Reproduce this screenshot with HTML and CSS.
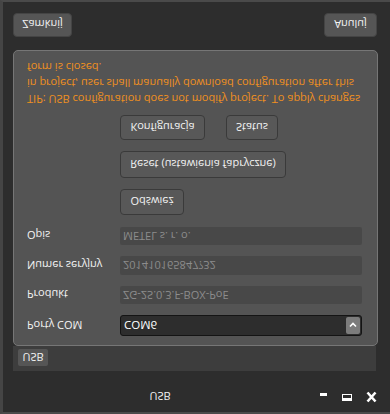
FILE: index.html
```
<!DOCTYPE html>
<html>
<head>
<meta charset="utf-8">
<link rel="stylesheet" href="styles.css">
</head>
<body>
<div class="window">
  <div class="titlebar">
    <span class="title">USB</span>
    <div class="controls">
      <svg class="ic" width="10" height="12" viewBox="0 0 10 12"><rect x="1" y="7" width="7" height="3" fill="#fff"/></svg>
      <svg class="ic" width="12" height="12" viewBox="0 0 12 12"><rect x="1.5" y="2.5" width="9" height="6" fill="none" stroke="#fff" stroke-width="1"/><rect x="1" y="2" width="10" height="3" fill="#fff"/></svg>
      <svg class="ic" width="13" height="12" viewBox="0 0 13 12"><path d="M2.5 1.5 L10.5 10.5 M10.5 1.5 L2.5 10.5" stroke="#fff" stroke-width="2.6" stroke-linecap="butt"/></svg>
    </div>
  </div>
  <div class="tabs"><div class="tab">USB</div></div>
  <div class="panel">
    <div class="row row-combo">
      <span class="label">Porty COM</span>
      <div class="combo"><span>COM6</span><span class="drop"><svg width="8" height="6" viewBox="0 0 8 6"><path d="M1 1.5 L4 4.5 L7 1.5" fill="none" stroke="#fff" stroke-width="1.6"/></svg></span></div>
    </div>
    <div class="row r2">
      <span class="label">Produkt</span>
      <div class="field">ZG-2S.0.3.F-BOX-PoE</div>
    </div>
    <div class="row r3">
      <span class="label">Numer seryjny</span>
      <div class="field f3">201410165847?32</div>
    </div>
    <div class="row r4">
      <span class="label">Opis</span>
      <div class="field">METEL s. r. o.</div>
    </div>
    <div class="actions">
      <button class="btn b-ref">Odśwież</button>
      <button class="btn b-reset">Reset (ustawienia fabryczne)</button>
      <div class="pair">
        <button class="btn b-konf">Konfiguracja</button>
        <button class="btn b-stat">Status</button>
      </div>
    </div>
    <div class="tip">TIP: USB configuration does not modify project. To apply changes<br>in project, user shall manually download configuration after this<br>form is closed.</div>
  </div>
  <div class="footer">
    <button class="btn b-close">Zamknij</button>
    <button class="btn b-cancel">Anuluj</button>
  </div>
</div>
</body>
</html>
```
FILE: styles.css
```
html, body {
  margin: 0;
  padding: 0;
  background: #2d2d2d;
}
body {
  width: 390px;
  height: 414px;
  overflow: hidden;
  transform: scaleY(-1);
  font-family: "Open Sans", "Noto Sans", sans-serif;
  font-size: 11px;
  color: #f2f2f2;
}
.window {
  box-sizing: border-box;
  width: 390px;
  height: 414px;
  background: #2d2d2d;
  border-top: 2px solid #4a4a4a;
  border-left: 3px solid #454545;
  border-bottom: 2px solid #4a4a4a;
  display: flex;
  flex-direction: column;
}
.titlebar {
  height: 30px;
  display: flex;
  align-items: center;
}
.title {
  width: 314px;
  text-align: center;
  font-size: 11px;
  padding-top: 1px;
}
.controls {
  display: flex;
  align-items: center;
  gap: 12px;
  margin-left: 2px;
}
.ic { display: block; }
.tabs {
  margin: 11px 14px 0 10px;
  height: 25px;
  background: #3d3d3d;
  display: flex;
  align-items: flex-end;
  padding: 0 0 3px 5px;
  box-sizing: border-box;
}
.tab {
  width: 30px;
  height: 17px;
  background: #555;
  border-radius: 2px;
  text-align: center;
  line-height: 17px;
  font-size: 11px;
}
.panel {
  margin: 0 12px 0 10px;
  height: 296px;
  box-sizing: border-box;
  background: #545454;
  border: 1px solid #767676;
  border-radius: 5px;
  padding: 9px 15px 0 13px;
  display: flex;
  flex-direction: column;
}
.row {
  display: flex;
  align-items: center;
}
.label {
  width: 93px;
  flex: none;
  font-size: 11px;
}
.combo {
  flex: 1;
  height: 21px;
  box-sizing: border-box;
  background: #2d2d2d;
  border: 1px solid #141414;
  border-radius: 3px;
  display: flex;
  align-items: center;
  justify-content: space-between;
  padding: 0 1px 0 3px;
  font-size: 11.5px;
  color: #fff;
}
.drop {
  width: 14px;
  height: 17px;
  background: #7c7c7c;
  border-radius: 2px;
  display: flex;
  align-items: center;
  justify-content: center;
}
.field {
  flex: 1;
  height: 18px;
  box-sizing: border-box;
  background: #484848;
  border-radius: 2px;
  padding: 0 3px;
  line-height: 18px;
  color: #8c8c8c;
  font-size: 11px;
}
.f3 { height: 19px; line-height: 19px; }
.r2 { margin-top: 11px; }
.r3 { margin-top: 11px; }
.r4 { margin-top: 11px; }
.actions {
  padding-left: 93px;
  display: flex;
  flex-direction: column;
  align-items: flex-start;
}
.btn {
  box-sizing: border-box;
  background: #585858;
  border: 1px solid #3a3a3a;
  border-radius: 4px;
  color: #f2f2f2;
  font-family: "Open Sans", "Noto Sans", sans-serif;
  font-size: 11px;
  padding: 0;
  margin: 0;
}
.b-ref { margin-top: 12px; width: 64px; height: 26px; }
.b-reset { margin-top: 11px; width: 166px; height: 27px; }
.pair { margin-top: 11px; display: flex; gap: 21px; }
.b-konf { width: 85px; height: 25px; }
.b-stat { width: 52px; height: 25px; }
.tip {
  margin-top: 8px;
  color: #f0901f;
  font-size: 11px;
  line-height: 16px;
  white-space: nowrap;
}
.footer {
  display: flex;
  justify-content: space-between;
  padding: 13px 13px 0 10px;
}
.footer .btn { height: 24px; background: #555; border-color: #444; }
.b-close { width: 59px; }
.b-cancel { width: 53px; }
```
